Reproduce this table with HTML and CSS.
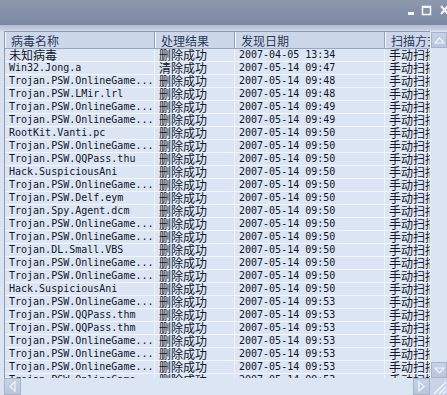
FILE: index.html
```html
<!DOCTYPE html>
<html>
<head>
<meta charset="utf-8">
<link rel="stylesheet" href="styles.css">
</head>
<body>
<div class="win">
  <div class="titlebar">
    <svg class="ctrls" width="42" height="25" viewBox="0 0 42 25">
      <rect x="3" y="12" width="6" height="3" fill="#f4f6fa"/>
      <rect x="17.5" y="6.5" width="8" height="8" fill="none" stroke="#f4f6fa" stroke-width="1.6"/>
      <rect x="17" y="6" width="9" height="2" fill="#f4f6fa"/>
      <path d="M36 6 L43 14 M43 6 L36 14" stroke="#f4f6fa" stroke-width="2"/>
    </svg>
  </div>
  <div class="panel">
    <div class="content">
      <div class="list">
        <div class="row head">
          <div class="cell c1">病毒名称</div>
          <div class="cell c2">处理结果</div>
          <div class="cell c3">发现日期</div>
          <div class="cell c4">扫描方式</div>
        </div>
        <div class="row"><div class="cell c1 cn">未知病毒</div><div class="cell c2 cn">删除成功</div><div class="cell c3">2007-04-05 13:34</div><div class="cell c4 cn">手动扫描</div></div>
        <div class="row"><div class="cell c1">Win32.Jong.a</div><div class="cell c2 cn">清除成功</div><div class="cell c3">2007-05-14 09:47</div><div class="cell c4 cn">手动扫描</div></div>
        <div class="row"><div class="cell c1">Trojan.PSW.OnlineGame...</div><div class="cell c2 cn">删除成功</div><div class="cell c3">2007-05-14 09:48</div><div class="cell c4 cn">手动扫描</div></div>
        <div class="row"><div class="cell c1">Trojan.PSW.LMir.lrl</div><div class="cell c2 cn">删除成功</div><div class="cell c3">2007-05-14 09:48</div><div class="cell c4 cn">手动扫描</div></div>
        <div class="row"><div class="cell c1">Trojan.PSW.OnlineGame...</div><div class="cell c2 cn">删除成功</div><div class="cell c3">2007-05-14 09:49</div><div class="cell c4 cn">手动扫描</div></div>
        <div class="row"><div class="cell c1">Trojan.PSW.OnlineGame...</div><div class="cell c2 cn">删除成功</div><div class="cell c3">2007-05-14 09:49</div><div class="cell c4 cn">手动扫描</div></div>
        <div class="row"><div class="cell c1">RootKit.Vanti.pc</div><div class="cell c2 cn">删除成功</div><div class="cell c3">2007-05-14 09:50</div><div class="cell c4 cn">手动扫描</div></div>
        <div class="row"><div class="cell c1">Trojan.PSW.OnlineGame...</div><div class="cell c2 cn">删除成功</div><div class="cell c3">2007-05-14 09:50</div><div class="cell c4 cn">手动扫描</div></div>
        <div class="row"><div class="cell c1">Trojan.PSW.QQPass.thu</div><div class="cell c2 cn">删除成功</div><div class="cell c3">2007-05-14 09:50</div><div class="cell c4 cn">手动扫描</div></div>
        <div class="row"><div class="cell c1">Hack.SuspiciousAni</div><div class="cell c2 cn">删除成功</div><div class="cell c3">2007-05-14 09:50</div><div class="cell c4 cn">手动扫描</div></div>
        <div class="row"><div class="cell c1">Trojan.PSW.OnlineGame...</div><div class="cell c2 cn">删除成功</div><div class="cell c3">2007-05-14 09:50</div><div class="cell c4 cn">手动扫描</div></div>
        <div class="row"><div class="cell c1">Trojan.PSW.Delf.eym</div><div class="cell c2 cn">删除成功</div><div class="cell c3">2007-05-14 09:50</div><div class="cell c4 cn">手动扫描</div></div>
        <div class="row"><div class="cell c1">Trojan.Spy.Agent.dcm</div><div class="cell c2 cn">删除成功</div><div class="cell c3">2007-05-14 09:50</div><div class="cell c4 cn">手动扫描</div></div>
        <div class="row"><div class="cell c1">Trojan.PSW.OnlineGame...</div><div class="cell c2 cn">删除成功</div><div class="cell c3">2007-05-14 09:50</div><div class="cell c4 cn">手动扫描</div></div>
        <div class="row"><div class="cell c1">Trojan.PSW.OnlineGame...</div><div class="cell c2 cn">删除成功</div><div class="cell c3">2007-05-14 09:50</div><div class="cell c4 cn">手动扫描</div></div>
        <div class="row"><div class="cell c1">Trojan.DL.Small.VBS</div><div class="cell c2 cn">删除成功</div><div class="cell c3">2007-05-14 09:50</div><div class="cell c4 cn">手动扫描</div></div>
        <div class="row"><div class="cell c1">Trojan.PSW.OnlineGame...</div><div class="cell c2 cn">删除成功</div><div class="cell c3">2007-05-14 09:50</div><div class="cell c4 cn">手动扫描</div></div>
        <div class="row"><div class="cell c1">Trojan.PSW.OnlineGame...</div><div class="cell c2 cn">删除成功</div><div class="cell c3">2007-05-14 09:50</div><div class="cell c4 cn">手动扫描</div></div>
        <div class="row"><div class="cell c1">Hack.SuspiciousAni</div><div class="cell c2 cn">删除成功</div><div class="cell c3">2007-05-14 09:50</div><div class="cell c4 cn">手动扫描</div></div>
        <div class="row"><div class="cell c1">Trojan.PSW.OnlineGame...</div><div class="cell c2 cn">删除成功</div><div class="cell c3">2007-05-14 09:53</div><div class="cell c4 cn">手动扫描</div></div>
        <div class="row"><div class="cell c1">Trojan.PSW.QQPass.thm</div><div class="cell c2 cn">删除成功</div><div class="cell c3">2007-05-14 09:53</div><div class="cell c4 cn">手动扫描</div></div>
        <div class="row"><div class="cell c1">Trojan.PSW.QQPass.thm</div><div class="cell c2 cn">删除成功</div><div class="cell c3">2007-05-14 09:53</div><div class="cell c4 cn">手动扫描</div></div>
        <div class="row"><div class="cell c1">Trojan.PSW.OnlineGame...</div><div class="cell c2 cn">删除成功</div><div class="cell c3">2007-05-14 09:53</div><div class="cell c4 cn">手动扫描</div></div>
        <div class="row"><div class="cell c1">Trojan.PSW.OnlineGame...</div><div class="cell c2 cn">删除成功</div><div class="cell c3">2007-05-14 09:53</div><div class="cell c4 cn">手动扫描</div></div>
        <div class="row"><div class="cell c1">Trojan.PSW.OnlineGame...</div><div class="cell c2 cn">删除成功</div><div class="cell c3">2007-05-14 09:53</div><div class="cell c4 cn">手动扫描</div></div>
        <div class="row"><div class="cell c1">Trojan.PSW.OnlineGame...</div><div class="cell c2 cn">删除成功</div><div class="cell c3">2007-05-14 09:53</div><div class="cell c4 cn">手动扫描</div></div>
      </div>
      <div class="vscroll">
        <div class="sbtn">
          <svg width="11" height="7" viewBox="0 0 11 7"><path d="M1 6 L5.5 1 L10 6 Z" fill="none" stroke="#f2f5fa" stroke-width="1.2"/></svg>
        </div>
        <div class="vtrack"></div>
        <div class="sbtn">
          <svg width="11" height="7" viewBox="0 0 11 7"><path d="M1 1 L5.5 6 L10 1 Z" fill="none" stroke="#f2f5fa" stroke-width="1.2"/></svg>
        </div>
      </div>
    </div>
    <div class="hbar">
      <div class="sbtn h">
        <svg width="7" height="11" viewBox="0 0 7 11"><path d="M6 1 L1 5.5 L6 10 Z" fill="none" stroke="#f2f5fa" stroke-width="1.2"/></svg>
      </div>
      <div class="htrack"></div>
      <div class="sbtn h">
        <svg width="7" height="11" viewBox="0 0 7 11"><path d="M1 1 L6 5.5 L1 10 Z" fill="none" stroke="#f2f5fa" stroke-width="1.2"/></svg>
      </div>
      <div class="grip">
        <svg width="17" height="17" viewBox="0 0 17 17"><path d="M16 4 L4 16 M16 9 L9 16 M16 13 L13 16" stroke="#f4f7fb" stroke-width="1.2"/></svg>
      </div>
    </div>
  </div>
</div>
</body>
</html>
```

FILE: styles.css
```css
html, body {
  margin: 0;
  padding: 0;
}
body {
  width: 447px;
  height: 395px;
  overflow: hidden;
  background: #d6e0ef;
  font-family: "DejaVu Sans Mono", "Noto Sans CJK SC", monospace;
  color: #101628;
}
.win {
  width: 447px;
  height: 395px;
  display: flex;
  flex-direction: column;
}
.titlebar {
  height: 25px;
  flex: none;
  background: linear-gradient(#8d98ad, #7a88a4);
  display: flex;
  justify-content: flex-end;
  align-items: center;
}
.ctrls {
  display: block;
}
.panel {
  flex: 1;
  display: flex;
  flex-direction: column;
  padding-top: 6px;
  background: linear-gradient(#b3bdd0 0px, #c5cfe0 5px, #d6e0ef 6px, #dde6f3 100%);
  min-height: 0;
}
.content {
  flex: 1;
  display: flex;
  min-height: 0;
  padding-left: 4px;
}
.list {
  flex: 1;
  overflow: hidden;
  border-top: 1px solid #8e9ab2;
  border-left: 1px solid #8e9ab2;
  background: #dce5f3;
}
.row {
  display: grid;
  grid-template-columns: 150px 80px 150px 60px;
  height: 13px;
  box-sizing: border-box;
  border-bottom: 1px solid #f3f6fb;
  font-size: 10px;
  letter-spacing: 0;
  line-height: 12px;
  white-space: nowrap;
}
.cell {
  padding-left: 4px;
  overflow: hidden;
  border-right: 1px solid #eef2f9;
}
.cn {
  font-family: "Noto Sans CJK SC", sans-serif;
  font-size: 12px;
}
.row.head {
  height: 17px;
  line-height: 17px;
  background: #ccd7ea;
  border-bottom: 1px solid #9aa6bd;
  font-family: "Noto Sans CJK SC", sans-serif;
  font-size: 12px;
  color: #2c3a58;
}
.row.head .cell {
  border-right: 1px solid #96a2b9;
  box-shadow: inset 1px 0 0 #f4f7fc;
  padding-left: 6px;
}
.vscroll {
  width: 17px;
  flex: none;
  display: flex;
  flex-direction: column;
  padding-top: 1px;
  border-left: 1px solid #e8eef8;
  box-sizing: border-box;
}
.sbtn {
  height: 16px;
  flex: none;
  display: flex;
  align-items: center;
  justify-content: center;
  background: linear-gradient(#c7d2e6, #b8c5dc);
  border: 1px solid #a7b3c9;
  box-sizing: border-box;
}
.vtrack {
  flex: 1;
  background: #dbe4f2;
}
.hbar {
  height: 17px;
  flex: none;
  display: flex;
  padding-left: 4px;
  background: #d8e2f1;
}
.sbtn.h {
  width: 17px;
  height: 17px;
}
.htrack {
  flex: 1;
  background: #dce5f3;
}
.grip {
  width: 17px;
  height: 17px;
  background: #c9d4e8;
}
.grip svg {
  display: block;
}
```
